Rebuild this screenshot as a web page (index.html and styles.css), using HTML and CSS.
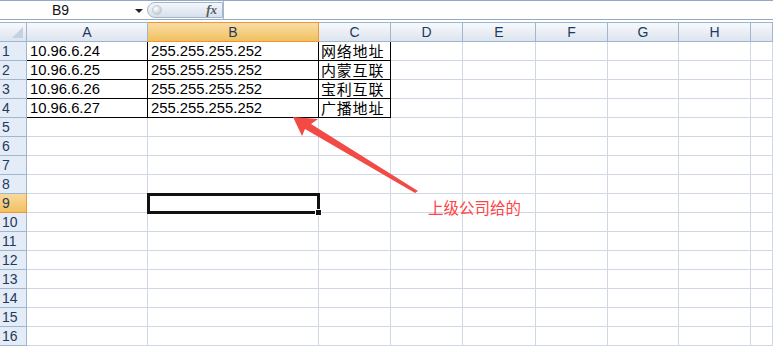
FILE: index.html
```html
<!DOCTYPE html>
<html lang="zh-CN">
<head>
    <meta charset="UTF-8">
    <meta name="viewport" content="width=device-width, initial-scale=1.0">
    <title>Sheet1</title>
    <link rel="stylesheet" href="styles.css">
</head>
<body>

<div class="formula-bar">
    <div class="name-box">
        <span class="name-value">B9</span>
        <span class="name-arrow"></span>
    </div>
    <div class="fx-pill">
        <span class="fx-knob"></span>
        <span class="fx-label">fx</span>
    </div>
    <div class="formula-input"></div>
</div>

<div class="sheet-wrap">
    <div class="sheet" id="sheet"></div>

    <svg class="note-arrow" width="773" height="331" viewBox="0 0 773 331">
        <!-- стрелка-пометка, координаты относительно листа -->
        <polygon points="293,95 318,97 311,102 418,169 415,171 305,107 302,114" fill="#f24a45"/>
    </svg>
    <div class="note-text">上级公司给的</div>
</div>

<script>
    const sheet = document.getElementById('sheet');
    const letters = ['A', 'B', 'C', 'D', 'E', 'F', 'G', 'H', ''];
    const data = [
        ['10.96.6.24', '255.255.255.252', '网络地址'],
        ['10.96.6.25', '255.255.255.252', '内蒙互联'],
        ['10.96.6.26', '255.255.255.252', '宝利互联'],
        ['10.96.6.27', '255.255.255.252', '广播地址']
    ];

    function add(cls, text) {
        const el = document.createElement('div');
        el.className = cls;
        if (text) el.textContent = text;
        sheet.appendChild(el);
        return el;
    }

    // Заголовки столбцов
    add('corner');
    letters.forEach((l, i) => add('col-head' + (i === 1 ? ' active' : ''), l));

    // Строки 1..16
    for (let r = 1; r <= 16; r++) {
        add('row-head' + (r === 9 ? ' active' : ''), String(r));
        letters.forEach((l, c) => {
            let cls = 'cell';
            let text = '';
            if (r <= 4 && c <= 2) {
                cls += ' boxed';
                text = data[r - 1][c];
                if (c === 2) cls += ' cjk';
            }
            if (r === 9 && c === 1) cls += ' selected';
            add(cls, text);
        });
    }
</script>

</body>
</html>
```

FILE: styles.css
```css
body {
    margin: 0;
    background: #ffffff;
    font-family: "Liberation Sans", Arial, sans-serif;
    overflow: hidden;
}

.formula-bar {
    display: flex;
    height: 20px;
    box-sizing: border-box;
    border-top: 1px solid #92a8c4;
    border-bottom: 1px solid #92a8c4;
    background: #ffffff;
}

.name-box {
    width: 147px;
    display: flex;
    align-items: center;
    position: relative;
    font-size: 14px;
    color: #111;
}

.name-value {
    margin-left: 52px;
}

.name-arrow {
    position: absolute;
    left: 135px;
    top: 8px;
    border-left: 4px solid transparent;
    border-right: 4px solid transparent;
    border-top: 4px solid #222;
}

.fx-pill {
    width: 76px;
    margin: 1px 0;
    box-sizing: border-box;
    border: 1px solid #a3b6cd;
    border-radius: 9px 0 0 9px;
    background: linear-gradient(#f4f7fb, #d6e0ec);
    display: flex;
    align-items: center;
    justify-content: space-between;
    padding: 0 5px 0 4px;
}

.fx-knob {
    width: 8px;
    height: 8px;
    border-radius: 50%;
    background: radial-gradient(circle at 35% 35%, #ffffff, #b4bcc7);
    border: 1px solid #c3cbd6;
}

.fx-label {
    font-family: "Liberation Serif", serif;
    font-style: italic;
    font-weight: bold;
    font-size: 13px;
    color: #555b63;
}

.formula-input {
    flex: 1;
    border-left: 1px solid #a3b6cd;
}

.sheet-wrap {
    position: relative;
    margin-top: 2px;
}

.sheet {
    display: grid;
    grid-template-columns: 27px 121px 171px 72px 72px 73px 72px 71px 72px 1fr;
    grid-template-rows: 20px repeat(16, 19px);
}

.corner,
.col-head {
    box-sizing: border-box;
    border-top: 1px solid #9eb6ce;
    border-bottom: 1px solid #9eb6ce;
    border-right: 1px solid #9eb6ce;
    background: linear-gradient(#f7f9fc, #dde4ee);
}

.corner {
    position: relative;
}

.corner::after {
    content: "";
    position: absolute;
    right: 3px;
    bottom: 3px;
    border-left: 11px solid transparent;
    border-bottom: 11px solid #c3d1e1;
}

.col-head {
    text-align: center;
    font-size: 14px;
    line-height: 18px;
    color: #1f3a5c;
}

.col-head.active {
    background: linear-gradient(#f9dda5, #f1c15f);
    border-color: #f29536;
}

.row-head {
    box-sizing: border-box;
    background: #e4ecf7;
    border-right: 1px solid #9eb6ce;
    border-bottom: 1px solid #9eb6ce;
    font-size: 14px;
    line-height: 18px;
    padding-left: 2px;
    color: #1f3a5c;
}

.row-head.active {
    background: linear-gradient(#f9d99b, #f1c15f);
    border-right-color: #f29536;
    border-bottom-color: #f29536;
}

.cell {
    box-sizing: border-box;
    border-right: 1px solid #d0d7e5;
    border-bottom: 1px solid #d0d7e5;
    font-size: 14.8px;
    line-height: 18px;
    padding-left: 3px;
    color: #000;
    white-space: nowrap;
}

.cell.boxed {
    border-right-color: #000;
    border-bottom-color: #000;
}

.cell.cjk {
    font-family: "Noto Sans CJK SC", sans-serif;
    font-size: 15px;
    letter-spacing: 0.8px;
    padding-left: 2px;
    line-height: 18px;
}

.cell.selected {
    position: relative;
    outline: 3px solid #111;
    outline-offset: -2px;
}

.cell.selected::after {
    content: "";
    position: absolute;
    right: -4px;
    bottom: -4px;
    width: 5px;
    height: 5px;
    background: #111;
    border: 1px solid #fff;
}

.note-arrow {
    position: absolute;
    left: 0;
    top: 0;
    pointer-events: none;
}

.note-text {
    position: absolute;
    left: 428px;
    top: 174px;
    font-family: "Noto Sans CJK SC", sans-serif;
    font-size: 15.5px;
    color: #ff4343;
}
```
